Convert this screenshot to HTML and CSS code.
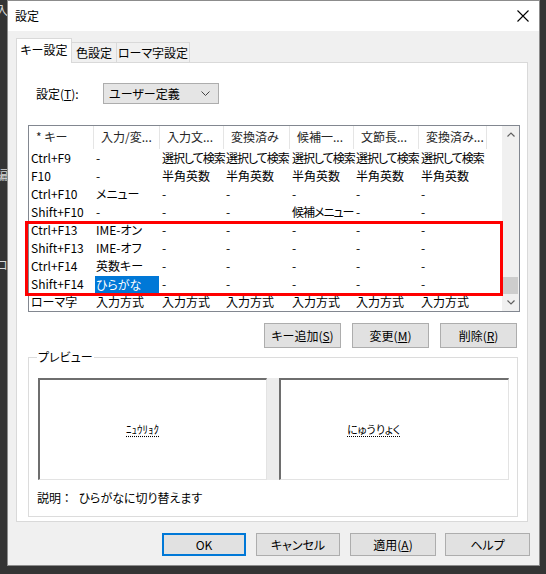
FILE: index.html
```html
<!DOCTYPE html>
<html lang="ja">
<head>
<meta charset="utf-8">
<title>設定</title>
<link rel="stylesheet" href="styles.css">
</head>
<body>
<div class="desktop">
  <span class="bg-frag frag-a">入</span>
  <span class="bg-frag frag-b">編</span>
  <span class="bg-frag frag-c">ロ</span>
  <div class="dialog">
    <div class="titlebar">
      <span class="title">設定</span>
      <svg class="close" width="12" height="12" viewBox="0 0 12 12"><path d="M0.5 0.5L11.5 11.5M11.5 0.5L0.5 11.5" stroke="#000" stroke-width="1.1" fill="none"/></svg>
    </div>
    <div class="body">
      <div class="tabs">
        <div class="tab active">キー設定</div>
        <div class="tab">色設定</div>
        <div class="tab">ローマ字設定</div>
      </div>
      <div class="panel">
        <div class="setting-row">
          <span class="setting-label">設定(<u>T</u>):</span>
          <div class="select">
            <span>ユーザー定義</span>
            <svg class="chev" width="9" height="5" viewBox="0 0 9 5"><path d="M0.5 0.5L4.5 4.5L8.5 0.5" stroke="#444" stroke-width="1" fill="none"/></svg>
          </div>
        </div>

        <div class="list">
          <div class="list-main">
            <div class="row header">
              <span>* キー</span><span>入力/変...</span><span>入力文...</span><span>変換済み</span><span>候補一...</span><span>文節長...</span><span>変換済み...</span><span class="filler"></span>
            </div>
            <div class="row"><span>Ctrl+F9</span><span>-</span><span class="tight">選択して検索</span><span class="tight">選択して検索</span><span class="tight">選択して検索</span><span class="tight">選択して検索</span><span class="tight">選択して検索</span></div>
            <div class="row"><span>F10</span><span>-</span><span>半角英数</span><span>半角英数</span><span>半角英数</span><span>半角英数</span><span>半角英数</span></div>
            <div class="row"><span>Ctrl+F10</span><span>メニュー</span><span>-</span><span>-</span><span>-</span><span>-</span><span>-</span></div>
            <div class="row"><span>Shift+F10</span><span>-</span><span>-</span><span>-</span><span class="tight">候補メニュー</span><span>-</span><span>-</span></div>
            <div class="row"><span>Ctrl+F13</span><span>IME-オン</span><span>-</span><span>-</span><span>-</span><span>-</span><span>-</span></div>
            <div class="row"><span>Shift+F13</span><span>IME-オフ</span><span>-</span><span>-</span><span>-</span><span>-</span><span>-</span></div>
            <div class="row"><span>Ctrl+F14</span><span>英数キー</span><span>-</span><span>-</span><span>-</span><span>-</span><span>-</span></div>
            <div class="row"><span>Shift+F14</span><span class="selected">ひらがな</span><span>-</span><span>-</span><span>-</span><span>-</span><span>-</span></div>
            <div class="row"><span>ローマ字</span><span>入力方式</span><span>入力方式</span><span>入力方式</span><span>入力方式</span><span>入力方式</span><span>入力方式</span></div>
          </div>
          <div class="scrollbar">
            <div class="sb-btn"><svg width="8" height="5" viewBox="0 0 8 5"><path d="M0.5 4.5L4 1L7.5 4.5" stroke="#606060" stroke-width="1.2" fill="none"/></svg></div>
            <div class="sb-track"><div class="sb-thumb"></div></div>
            <div class="sb-btn"><svg width="8" height="5" viewBox="0 0 8 5"><path d="M0.5 0.5L4 4L7.5 0.5" stroke="#606060" stroke-width="1.2" fill="none"/></svg></div>
          </div>
          <div class="mark-box"></div>
        </div>

        <div class="list-buttons">
          <button class="btn small">キー追加(<u>S</u>)</button>
          <button class="btn small">変更(<u>M</u>)</button>
          <button class="btn small">削除(<u>R</u>)</button>
        </div>

        <fieldset class="preview-group">
          <legend>プレビュー</legend>
          <div class="preview-boxes">
            <div class="pbox left"><span class="ptext kana-half">ﾆｭｳﾘｮｸ</span></div>
            <div class="pbox right"><span class="ptext">にゅうりょく</span></div>
          </div>
          <div class="desc"><span>説明 ：</span><span class="desc-text">ひらがなに切り替えます</span></div>
        </fieldset>
      </div>

      <div class="footer">
        <button class="btn wide default">OK</button>
        <button class="btn wide">キャンセル</button>
        <button class="btn wide w86">適用(<u>A</u>)</button>
        <button class="btn wide w85">ヘルプ</button>
      </div>
    </div>
  </div>
</div>
</body>
</html>
```
FILE: styles.css
```css
* { box-sizing: border-box; }
html, body { margin: 0; padding: 0; }
body {
  width: 546px;
  height: 574px;
  overflow: hidden;
  background: #343434;
  font-family: "Noto Sans CJK JP", "Noto Sans", sans-serif;
  font-size: 12px;
  color: #000;
  font-feature-settings: "palt";
}
.desktop {
  position: relative;
  width: 546px;
  height: 574px;
  padding-left: 7px;
}
.bg-frag {
  position: absolute;
  left: -4px;
  color: #d8d8d8;
  font-size: 12px;
  line-height: 14px;
}
.frag-a { top: 3px; }
.frag-b { top: 168px; }
.frag-c { top: 258px; }

.dialog {
  position: relative;
  width: 533px;
  height: 566px;
  border: 1px solid #8c8c8c;
  background: #f0f0f0;
  display: flex;
  flex-direction: column;
}
.titlebar {
  height: 30px;
  flex: none;
  background: #fff;
  display: flex;
  align-items: center;
  justify-content: space-between;
  padding: 0 10px 0 7px;
}
.title { line-height: 16px; }
.close { display: block; }

.body {
  padding: 7px 11px 0 8px;
}
.tabs {
  display: flex;
  align-items: flex-end;
  height: 24px;
}
.tab {
  height: 20px;
  border: 1px solid #d9d9d9;
  border-bottom: none;
  background: #f0f0f0;
  display: flex;
  align-items: center;
  justify-content: center;
  line-height: 14px;
  margin-left: -1px;
}
.tab:nth-child(2) { width: 46px; }
.tab:nth-child(3) { width: 74px; }
.tab.active {
  position: relative;
  z-index: 1;
  width: 56px;
  height: 25px;
  margin-left: 0;
  margin-bottom: -1px;
  background: #fff;
  padding-bottom: 2px;
}
.panel {
  width: 512px;
  height: 460px;
  border: 1px solid #d9d9d9;
  background: #fff;
}
.setting-row {
  display: flex;
  align-items: center;
  margin-top: 20px;
  padding-left: 19px;
}
.setting-label { width: 67px; }
.select {
  width: 116px;
  height: 21px;
  background: #e5e5e5;
  border: 1px solid #adadad;
  display: flex;
  align-items: center;
  justify-content: space-between;
  padding: 0 8px 0 5px;
}

.list {
  position: relative;
  margin: 21px 0 0 11px;
  width: 492px;
  height: 187px;
  border: 1px solid #828790;
  display: flex;
}
.list-main {
  flex: 1;
  overflow: hidden;
}
.row {
  display: grid;
  grid-template-columns: 65px 66px 64px 66px 64px 65px 68px 1fr;
  height: 18px;
  line-height: 18px;
  white-space: nowrap;
}
.row span { padding-left: 2px; }
.row span.tight { letter-spacing: -1px; }
.row.header { height: 23px; line-height: 22px; color: #262626; }
.row.header span {
  padding-left: 7px;
  border-right: 1px solid #e5e5e5;
  overflow: hidden;
}
.row.header span.filler { border-right: none; }
.row span.selected {
  background: #0078d7;
  color: #fff;
  margin: 1px 1px 0 1px;
  padding-left: 1px;
  line-height: 17px;
}
.scrollbar {
  width: 17px;
  background: #f0f0f0;
  display: flex;
  flex-direction: column;
}
.sb-btn {
  height: 17px;
  display: flex;
  align-items: center;
  justify-content: center;
}
.sb-btn svg { display: block; }
.sb-track {
  flex: 1;
  display: flex;
  flex-direction: column;
  justify-content: flex-end;
  align-items: center;
}
.sb-thumb {
  width: 15px;
  height: 17px;
  background: #cdcdcd;
}
.mark-box {
  position: absolute;
  left: -4px;
  top: 95px;
  width: 478px;
  height: 75px;
  border: 3px solid #ff0000;
  pointer-events: none;
}

.btn {
  font-family: inherit;
  font-size: 12px;
  color: #000;
  background: #e1e1e1;
  border: 1px solid #adadad;
  padding: 0;
  display: flex;
  align-items: center;
  justify-content: center;
  font-feature-settings: "palt";
}
.list-buttons {
  display: flex;
  justify-content: flex-end;
  gap: 11px;
  margin: 11px 10px 0 0;
}
.btn.small { width: 77px; height: 25px; }

.preview-group {
  margin: 1px 0 0 11px;
  width: 489px;
  height: 168px;
  border: 1px solid #dcdcdc;
  padding: 13px 8px 0 8px;
}
.preview-group legend {
  padding: 0 1px;
  margin-left: 0;
  line-height: 16px;
}
.preview-boxes {
  display: flex;
  gap: 12px;
  height: 102px;
  background: #ececec;
  margin-left: 1px;
  width: 471px;
}
.pbox {
  background: #fff;
  border-top: 2px solid #6e6e6e;
  border-left: 2px solid #6e6e6e;
  border-right: 1px solid #e3e3e3;
  border-bottom: 1px solid #e3e3e3;
  padding-top: 40px;
}
.pbox.left { width: 229px; padding-left: 86px; }
.pbox.right { width: 230px; padding-left: 66px; }
.ptext {
  font-size: 11px;
  line-height: 16px;
  text-decoration: underline dotted #000;
  text-underline-offset: 2px;
}
.ptext.kana-half { font-feature-settings: normal; font-size: 11px; }
.desc {
  margin-top: 10px;
  line-height: 16px;
}
.desc-text { margin-left: 9px; }

.footer {
  display: flex;
  justify-content: flex-end;
  gap: 10px;
  margin: 11px -2px 0 0;
}
.btn.wide { width: 84px; height: 23px; }
.btn.wide.w86 { width: 86px; margin-right: -1px; }
.btn.wide.w85 { width: 85px; }
.btn.default { border: 2px solid #0078d7; }
```
